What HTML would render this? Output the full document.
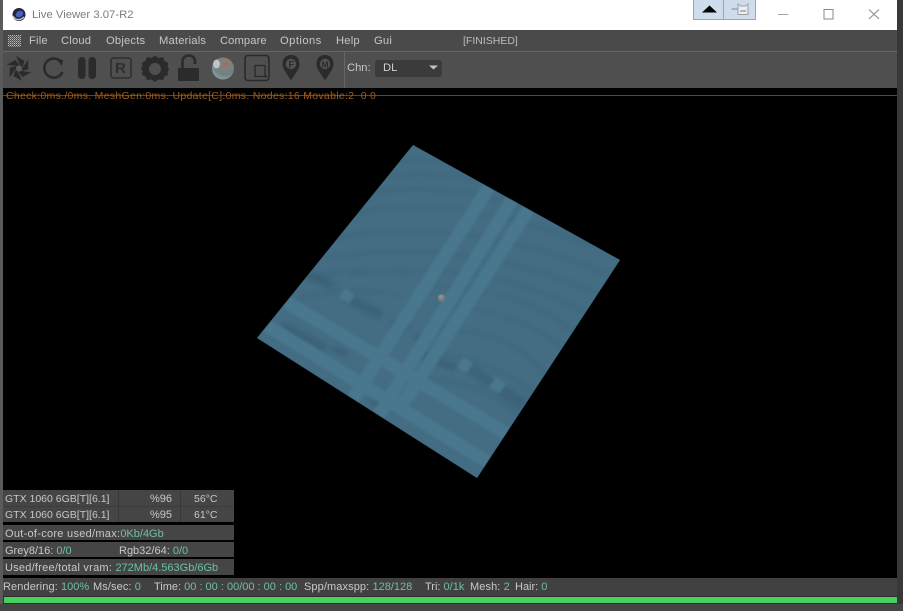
<!DOCTYPE html>
<html>
<head>
<meta charset="utf-8">
<style>
html,body{margin:0;padding:0;width:903px;height:611px;overflow:hidden;background:#3a3a3a;}
body{position:relative;font-family:"Liberation Sans",sans-serif;}
.a{position:absolute;}
.t{position:absolute;white-space:nowrap;font-size:11.200px;line-height:14px;color:#c6c6c6;}
.g{color:#6cc0a0;}
.p{position:absolute;background:#454545;}
.s{position:absolute;white-space:nowrap;font-size:11px;line-height:14px;color:#c8c8c8;}
</style>
</head>
<body>
<div class="a" style="left:0;top:0;width:3px;height:611px;background:#5a5a5a"></div>
<div class="a" style="left:897px;top:0;width:6px;height:611px;background:#383838"></div>
<div class="a" style="left:3px;top:0;width:894px;height:30px;background:#fff"></div>

<svg class="a" style="left:10px;top:6px" width="18" height="18" viewBox="0 0 18 18">
<circle cx="9" cy="8.500" r="6.500" fill="#23263f"/>
<ellipse cx="9.500" cy="8" rx="4" ry="3" fill="#4a5fc4" transform="rotate(-30 9.500 8)"/>
<path d="M3 10C5 14 10 15 14 11" stroke="#c4c8d8" stroke-width="1.300" fill="none"/>
</svg>
<div class="t" style="left:32px;top:8px;color:#7d7d7d;font-size:11.300px;">Live Viewer 3.07-R2</div>

<div class="a" style="left:693px;top:0;width:31px;height:20px;background:#cfdcec;border:1px solid #93a6bd;border-top:0;box-sizing:border-box"></div>
<div class="a" style="left:724px;top:0;width:32px;height:20px;background:#cfdcec;border:1px solid #93a6bd;border-top:0;border-left:0;box-sizing:border-box"></div>
<svg class="a" style="left:693px;top:0" width="64" height="20" viewBox="0 0 64 20">
<path d="M9 12.500L16.500 5.500L24 12.500Z" fill="#000"/>
<path d="M38.500 9H45" stroke="#8a8a8a" stroke-width="1"/>
<path d="M45 4L47.500 6H52.500L55 4V14.500H45Z" fill="#e8eef4" stroke="#a0a0a0" stroke-width="1"/>
<path d="M47 11H53" stroke="#808080" stroke-width="1"/>
</svg>
<svg class="a" style="left:770px;top:0" width="127" height="30" viewBox="770 0 127 30">
<path d="M778 14.500H788.500" stroke="#a5a5a5" stroke-width="1"/>
<rect x="824" y="9.500" width="9" height="9.500" fill="none" stroke="#8a8a8a"/>
<path d="M869 9.500L879 19M879 9.500L869 19" stroke="#8a8a8a" stroke-width="1" fill="none"/>
</svg>

<div class="a" style="left:3px;top:30px;width:894px;height:21px;background:#4a4a4a"></div>
<div class="a" style="left:3px;top:51px;width:894px;height:1px;background:#666"></div>
<svg class="a" style="left:8px;top:35px" width="13" height="12">
<defs><pattern id="d" width="2" height="2" patternUnits="userSpaceOnUse"><rect width="1" height="1" fill="#bdbdbd"/><rect x="1" y="1" width="1" height="1" fill="#8c8c8c"/></pattern></defs>
<rect width="13" height="12" fill="url(#d)"/>
</svg>
<div class="t" style="left:29px;top:34px;letter-spacing:.2px">File</div>
<div class="t" style="left:61px;top:34px;letter-spacing:.2px">Cloud</div>
<div class="t" style="left:106px;top:34px;letter-spacing:.2px">Objects</div>
<div class="t" style="left:159px;top:34px;letter-spacing:.2px">Materials</div>
<div class="t" style="left:220px;top:34px;letter-spacing:.1px">Compare</div>
<div class="t" style="left:280px;top:34px;letter-spacing:.45px">Options</div>
<div class="t" style="left:336px;top:34px;letter-spacing:.2px">Help</div>
<div class="t" style="left:374px;top:34px;letter-spacing:.2px">Gui</div>
<div class="t" style="left:463px;top:34px;font-size:10.500px;color:#bdbdbd">[FINISHED]</div>

<div class="a" style="left:3px;top:52px;width:894px;height:36px;background:#4f4f4f"></div>
<svg class="a" style="left:0;top:50px" width="346" height="40" viewBox="0 50 346 40">
<g fill="#2b2b2b" transform="translate(19 68.500)">
<path d="M1.500 -2.500L-3 -12.500L5.500 -7.500L3.500 -1.500Z"/>
<path d="M1.500 -2.500L-3 -12.500L5.500 -7.500L3.500 -1.500Z" transform="rotate(60)"/>
<path d="M1.500 -2.500L-3 -12.500L5.500 -7.500L3.500 -1.500Z" transform="rotate(120)"/>
<path d="M1.500 -2.500L-3 -12.500L5.500 -7.500L3.500 -1.500Z" transform="rotate(180)"/>
<path d="M1.500 -2.500L-3 -12.500L5.500 -7.500L3.500 -1.500Z" transform="rotate(240)"/>
<path d="M1.500 -2.500L-3 -12.500L5.500 -7.500L3.500 -1.500Z" transform="rotate(300)"/>
<circle r="2.800" fill="#5c5c5c"/>
</g>
<path d="M61.500 62.500A9.500 9.500 0 1 0 62.500 72" fill="none" stroke="#2b2b2b" stroke-width="2.600"/>
<path d="M56 58.500L63 60L62 66Z" fill="#2b2b2b"/>
<rect x="78" y="57" width="7.500" height="22" rx="3.500" fill="#2b2b2b"/>
<rect x="88.500" y="57" width="7.500" height="22" rx="3.500" fill="#2b2b2b"/>
<rect x="111" y="58" width="20" height="20" rx="2.500" fill="none" stroke="#2e2e2e" stroke-width="1.500"/>
<text x="115" y="73" font-family="Liberation Sans" font-weight="bold" font-size="15" fill="#2e2e2e">R</text>
<path d="M155 55.500L158.500 58L163 57L164.500 61L168.500 63L167.500 67L169 69L167.500 72L168 75L164.500 76.500L163 80L158.500 79.500L155 82L151.500 79.500L147 80L145.500 76.500L142 75L142.500 71L141 69L142.500 65.500L142 62.500L145.500 61L147 57L151.500 58Z" fill="#2b2b2b"/>
<circle cx="155" cy="69" r="6" fill="#4f4f4f"/>
<rect x="178" y="68" width="21" height="13" fill="#2b2b2b"/>
<path d="M182.500 68V61.500C182.500 53.500 195 53.500 195 61.500V64" fill="none" stroke="#2b2b2b" stroke-width="2.600"/>
<rect x="245" y="55.500" width="24" height="25" rx="3" fill="none" stroke="#2a2a2a" stroke-width="1.600"/>
<path d="M255 65.500H265V76.500H255Z" fill="none" stroke="#2a2a2a" stroke-width="1.300"/>
<rect x="264.500" y="75" width="2.500" height="2.500" fill="#2a2a2a"/>
<path d="M291 55C284.500 55 282.500 60 282.500 64C282.500 69 287 74 291 80.500C295 74 299.500 69 299.500 64C299.500 60 297.500 55 291 55Z" fill="#2b2b2b"/>
<circle cx="291" cy="64" r="5.200" fill="#525252"/>
<text x="288.500" y="67.500" font-family="Liberation Sans" font-weight="bold" font-size="9" fill="#2b2b2b">F</text>
<path d="M325 55C318.500 55 316.500 60 316.500 64C316.500 69 321 74 325 80.500C329 74 333.500 69 333.500 64C333.500 60 331.500 55 325 55Z" fill="#2b2b2b"/>
<circle cx="325" cy="64" r="5.200" fill="#525252"/>
<text x="321.500" y="67.500" font-family="Liberation Sans" font-weight="bold" font-size="8.500" fill="#2b2b2b">M</text>
<defs>
<radialGradient id="b" cx=".62" cy=".3" r=".75"><stop offset="0" stop-color="#96705f"/><stop offset=".28" stop-color="#86807a"/><stop offset=".65" stop-color="#6c8284"/><stop offset="1" stop-color="#8ea0a0"/></radialGradient>
</defs>
<circle cx="223" cy="68.500" r="11" fill="url(#b)"/>
<ellipse cx="216.500" cy="64" rx="3.500" ry="4.500" fill="#d6dcdc" opacity=".75"/>
<rect x="344" y="52" width="1" height="36" fill="#666"/>
</svg>
<div class="t" style="left:347px;top:61px">Chn:</div>
<div class="a" style="left:375px;top:60px;width:67px;height:17px;background:#3b3b3b;border-radius:3px"></div>
<div class="t" style="left:383px;top:61px;color:#d0d0d0">DL</div>
<svg class="a" style="left:429px;top:65px" width="10" height="6"><path d="M0 0.500H9L4.500 4.500Z" fill="#c2c2c2"/></svg>

<div class="a" style="left:3px;top:88px;width:894px;height:490px;background:#000"></div>

<svg class="a" style="left:240px;top:130px" width="400" height="360" viewBox="240 130 400 360">
<defs>
<clipPath id="c"><path d="M413 145L620 260L477 478L257 338Z"/></clipPath>
<filter id="bl" x="-10%" y="-10%" width="120%" height="120%"><feGaussianBlur stdDeviation="2.200"/></filter>
<filter id="bl2" x="-10%" y="-10%" width="120%" height="120%"><feGaussianBlur stdDeviation="1"/></filter>
</defs>
<g clip-path="url(#c)">
<rect x="240" y="130" width="400" height="360" fill="#446d84"/>
<g filter="url(#bl)" fill="none" stroke="#38606f" stroke-width="3" opacity=".4">
<path d="M390 163Q450 155 490 175"/>
<path d="M375 178Q450 165 530 195"/>
<path d="M360 195Q450 175 560 220"/>
<path d="M345 215Q450 190 590 245"/>
<path d="M335 238Q470 215 610 275"/>
<path d="M325 258Q470 235 600 295"/>
<path d="M350 275Q480 255 590 315"/>
<path d="M420 285Q520 285 578 335"/>
<path d="M440 305Q520 310 565 350"/>
<path d="M430 330Q510 325 548 378"/>
<path d="M425 355Q490 355 535 395"/>
<path d="M420 378Q480 380 520 415"/>
<path d="M310 280Q350 265 410 275"/>
<path d="M300 298Q350 285 400 295"/>
</g>
<g filter="url(#bl)" fill="#35566a" opacity=".45">
<path d="M310 270L335 282L332 290L305 278Z"/>
<path d="M353 295L385 312L378 320L345 303Z"/>
<path d="M395 318L410 325L404 333L390 326Z"/>
<path d="M418 332L430 340L422 345L412 340Z"/>
<path d="M422 350L460 365L452 372L415 357Z"/>
<path d="M472 362L495 380L488 387L466 373Z"/>
<path d="M505 385L528 400L520 410L497 395Z"/>
<path d="M375 395L385 400L378 408L368 402Z"/>
<path d="M285 322L330 345L322 352L278 330Z"/>
<path d="M335 345L350 352L345 358L330 350Z"/>
</g>
<g filter="url(#bl2)" fill="none" stroke="#4a778e">
<path d="M347 408L495 178" stroke-width="13"/>
<path d="M374 423L518 190" stroke-width="13"/>
<path d="M397 413L536 198" stroke-width="13"/>
<path d="M258 320L492 465" stroke-width="13"/>
<path d="M278 297L517 440" stroke-width="13"/>
<path d="M342 293L352 299" stroke-width="11"/>
<path d="M460 362L470 368" stroke-width="12"/>
<path d="M493 382L503 388" stroke-width="12"/>
</g>
<path d="M413 145L620 260L477 478L257 338Z" fill="none" stroke="#3d6880" stroke-width="1.500"/>
</g>
<circle cx="441.500" cy="298" r="4" fill="#6f7b80"/>
<circle cx="441" cy="297" r="2" fill="#8a9296"/>
</svg>

<div class="a" style="left:3px;top:95px;width:894px;height:1px;background:#4a4a4a"></div>
<div class="t" style="left:6px;top:89px;color:#a05c1c;font-size:10.500px;letter-spacing:.29px">Check:0ms./0ms. MeshGen:0ms. Update[C]:0ms. Nodes:16 Movable:2&nbsp; 0 0</div>

<div class="p" style="left:3px;top:490px;width:231px;height:32px"></div>
<div class="a" style="left:3px;top:506px;width:231px;height:1px;background:#3c3c3c"></div>
<div class="a" style="left:118px;top:490px;width:1px;height:32px;background:#383838"></div>
<div class="a" style="left:180px;top:490px;width:1px;height:32px;background:#383838"></div>
<div class="s" style="left:5px;top:492px;font-size:10.500px">GTX 1060 6GB[T][6.1]</div>
<div class="s" style="left:150px;top:492px">%96</div>
<div class="s" style="left:194px;top:492px;font-size:10.500px">56°C</div>
<div class="s" style="left:5px;top:508px;font-size:10.500px">GTX 1060 6GB[T][6.1]</div>
<div class="s" style="left:150px;top:508px">%95</div>
<div class="s" style="left:194px;top:508px;font-size:10.500px">61°C</div>

<div class="p" style="left:3px;top:525px;width:231px;height:15px"></div>
<div class="s" style="left:5px;top:527px"><span style="letter-spacing:.28px">Out-of-core used/max:</span><span class="g">0Kb/4Gb</span></div>
<div class="p" style="left:3px;top:542px;width:231px;height:15px"></div>
<div class="s" style="left:5px;top:544px">Grey8/16: <span class="g">0/0</span></div>
<div class="s" style="left:119px;top:544px">Rgb32/64: <span class="g">0/0</span></div>
<div class="p" style="left:3px;top:559px;width:231px;height:16px"></div>
<div class="s" style="left:5px;top:561px"><span style="letter-spacing:.24px">Used/free/total vram: </span><span class="g">272Mb/4.563Gb/6Gb</span></div>

<div class="a" style="left:3px;top:578px;width:894px;height:18px;background:#414141"></div>
<div class="a" style="left:3px;top:596px;width:894px;height:8px;background:#2c2c2c"></div>
<div class="a" style="left:4px;top:597px;width:893px;height:6px;background:#46d060"></div>
<div class="a" style="left:0;top:604px;width:903px;height:7px;background:#454545"></div>
<div class="s" style="left:3px;top:580px"><span style="letter-spacing:.1px">Rendering: </span><span class="g">100%</span></div>
<div class="s" style="left:93px;top:580px"><span style="letter-spacing:.1px">Ms/sec: </span><span class="g">0</span></div>
<div class="s" style="left:154px;top:580px">Time: <span class="g">00 : 00 : 00/00 : 00 : 00</span></div>
<div class="s" style="left:304px;top:580px"><span style="letter-spacing:.1px">Spp/maxspp: </span><span class="g">128/128</span></div>
<div class="s" style="left:425px;top:580px">Tri: <span class="g">0/1k</span></div>
<div class="s" style="left:470px;top:580px"><span style="letter-spacing:.1px">Mesh: </span><span class="g">2</span></div>
<div class="s" style="left:515px;top:580px">Hair: <span class="g">0</span></div>
</body>
</html>
